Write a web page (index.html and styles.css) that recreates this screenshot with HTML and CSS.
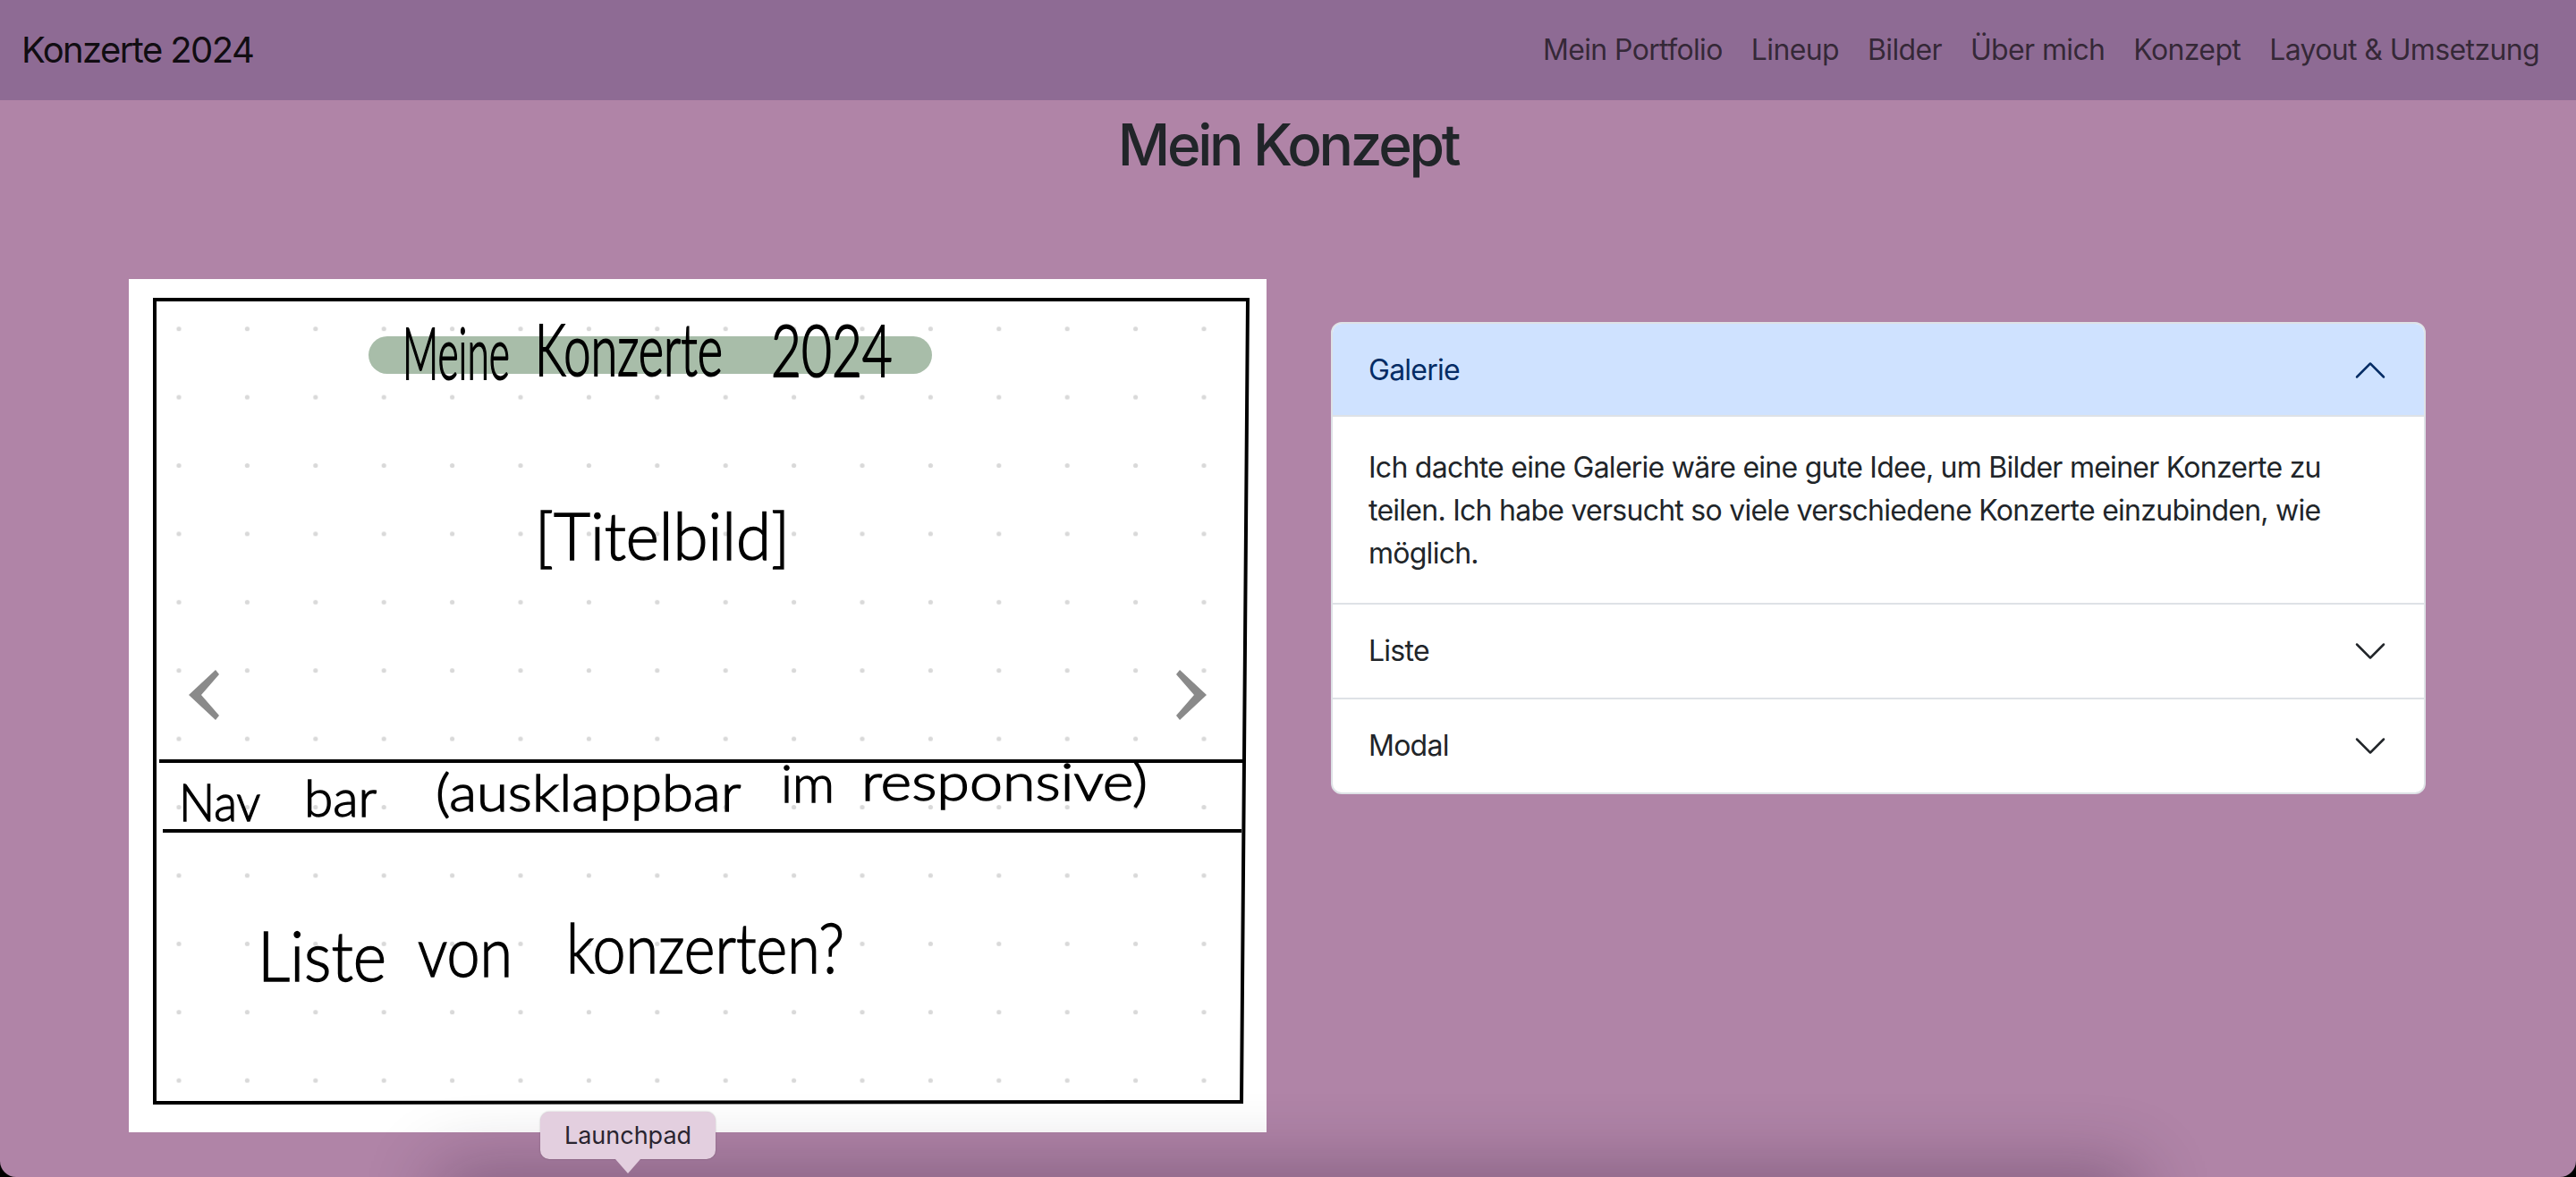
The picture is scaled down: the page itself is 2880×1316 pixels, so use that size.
FILE: index.html
```html
<!DOCTYPE html>
<html lang="de">
<head>
    <meta charset="UTF-8">
    <title>Mein Konzept</title>
    <link rel="stylesheet" href="styles.css">
</head>
<body>
<div class="screen">
    <nav class="navbar">
        <a class="brand" href="#">Konzerte 2024</a>
        <ul class="nav-list">
            <li>Mein Portfolio</li>
            <li>Lineup</li>
            <li>Bilder</li>
            <li>Über mich</li>
            <li>Konzept</li>
            <li>Layout &amp; Umsetzung</li>
        </ul>
    </nav>

    <h2 class="page-title">Mein Konzept</h2>

    <div class="concept-row">
        <div class="sketch">
            <!-- the viewBox uses page coordinates, the scan is a free canvas -->
            <svg class="sketch-img" viewBox="144 312 1272 954" width="1272" height="954">
                <defs>
                    <pattern id="dots" x="161.8" y="329.5" width="76.4" height="76.4" patternUnits="userSpaceOnUse">
                        <circle cx="38.2" cy="38.2" r="2.6" fill="#d9d9d9"/>
                    </pattern>
                </defs>
                <rect x="162" y="330" width="1222" height="917" fill="url(#dots)"/>
                <rect x="412" y="376" width="630" height="42" rx="21" fill="#a8bda9"/>
                <path class="pen" d="M173 335 L1395 335 L1388 1232 L173 1233 Z"/>
                <path class="pen" d="M178 851 L1390 851"/>
                <path class="pen" d="M182 929 L1388 929"/>

                <text class="hand tall" transform="translate(450 424) scale(.54 1)" textLength="222" lengthAdjust="spacingAndGlyphs">Meine</text>
                <text class="hand tall" transform="translate(598 420) scale(.65 1)" textLength="323" lengthAdjust="spacingAndGlyphs">Konzerte</text>
                <text class="hand tall" transform="translate(862 421) scale(.73 1)" textLength="186" lengthAdjust="spacingAndGlyphs">2024</text>
                <text class="hand title-word" x="598" y="626" textLength="285" lengthAdjust="spacingAndGlyphs">[Titelbild]</text>

                <text class="hand mid">
                    <tspan x="200" y="918" textLength="90" lengthAdjust="spacingAndGlyphs">Nav</tspan>
                    <tspan x="340" y="913" textLength="80" lengthAdjust="spacingAndGlyphs">bar</tspan>
                    <tspan x="487" y="907" textLength="340" lengthAdjust="spacingAndGlyphs">(ausklappbar</tspan>
                    <tspan x="873" y="897" textLength="60" lengthAdjust="spacingAndGlyphs">im</tspan>
                    <tspan x="963" y="895" textLength="320" lengthAdjust="spacingAndGlyphs">responsive)</tspan>
                </text>

                <text class="hand big">
                    <tspan x="288" y="1097" textLength="144" lengthAdjust="spacingAndGlyphs">Liste</tspan>
                    <tspan x="467" y="1092" textLength="106" lengthAdjust="spacingAndGlyphs">von</tspan>
                    <tspan x="633" y="1088" textLength="311" lengthAdjust="spacingAndGlyphs">konzerten?</tspan>
                </text>
            </svg>
            <span class="ctrl ctrl-prev">
                <svg viewBox="0 0 34 56" width="34" height="56"><path d="M30 0 L34 5 L14 28 L34 51 L30 56 L0 28 Z"/></svg>
            </span>
            <span class="ctrl ctrl-next">
                <svg viewBox="0 0 34 56" width="34" height="56"><path d="M4 0 L0 5 L20 28 L0 51 L4 56 L34 28 Z"/></svg>
            </span>
        </div>

        <div class="accordion">
            <div class="acc-item">
                <div class="acc-head open">
                    <span>Galerie</span>
                    <svg class="chev up" viewBox="0 0 16 16" width="40" height="40"><path d="M1.646 4.646a.5.5 0 0 1 .708 0L8 10.293l5.646-5.647a.5.5 0 0 1 .708.708l-6 6a.5.5 0 0 1-.708 0l-6-6a.5.5 0 0 1 0-.708z"/></svg>
                </div>
                <div class="acc-body">Ich dachte eine Galerie wäre eine gute Idee, um Bilder meiner Konzerte zu teilen. Ich habe versucht so viele verschiedene Konzerte einzubinden, wie möglich.</div>
            </div>
            <div class="acc-item">
                <div class="acc-head">
                    <span>Liste</span>
                    <svg class="chev" viewBox="0 0 16 16" width="40" height="40"><path d="M1.646 4.646a.5.5 0 0 1 .708 0L8 10.293l5.646-5.647a.5.5 0 0 1 .708.708l-6 6a.5.5 0 0 1-.708 0l-6-6a.5.5 0 0 1 0-.708z"/></svg>
                </div>
            </div>
            <div class="acc-item">
                <div class="acc-head">
                    <span>Modal</span>
                    <svg class="chev" viewBox="0 0 16 16" width="40" height="40"><path d="M1.646 4.646a.5.5 0 0 1 .708 0L8 10.293l5.646-5.647a.5.5 0 0 1 .708.708l-6 6a.5.5 0 0 1-.708 0l-6-6a.5.5 0 0 1 0-.708z"/></svg>
                </div>
            </div>
        </div>
    </div>

    <div class="dock-shadow"></div>
    <div class="tooltip">Launchpad</div>
</div>
</body>
</html>
```

FILE: styles.css
```css
*{
    margin: 0;
    padding: 0;
    box-sizing: border-box;
}
html,body{
    background: #000;
}
ul{
    list-style: none;
}
.screen{
    position: relative;
    width: 2880px;
    height: 1316px;
    overflow: hidden;
    border-radius: 0 0 18px 18px;
    background: #b084a7;
    color: #212529;
    font-family: Inter, "Liberation Sans", sans-serif;
    font-size: 32px;
    line-height: 1.5;
    letter-spacing: -.74px;
}

/* navbar */
.navbar{
    display: flex;
    justify-content: space-between;
    align-items: center;
    height: 112px;
    padding: 0 41px 0 24px;
    background: #8e6b94;
}
.brand{
    color: rgba(0,0,0,.9);
    font-size: 40px;
    letter-spacing: -1.6px;
    text-decoration: none;
}
.nav-list{
    display: flex;
    gap: 32px;
    color: rgba(0,0,0,.65);
    letter-spacing: -.63px;
}

.page-title{
    margin-top: 12px;
    font-size: 64px;
    font-weight: 550;
    letter-spacing: -3.3px;
    line-height: 1.2;
    text-align: center;
}

.concept-row{
    display: flex;
    gap: 72px;
    margin-top: 111px;
    padding-left: 144px;
}

/* scanned sketch */
.sketch{
    position: relative;
    width: 1272px;
    height: 954px;
    background: #fff;
}
.sketch-img{
    display: block;
}
.pen{
    fill: none;
    stroke: #000;
    stroke-width: 4;
}
.hand{
    fill: #000;
    stroke: #000;
    stroke-width: 1.4;
    font-family: Lato, "Open Sans", sans-serif;
    font-weight: 300;
    letter-spacing: 0;
}
.tall{
    font-size: 80px;
    stroke-width: 2;
}
.title-word{
    font-size: 72px;
}
.mid{
    font-size: 58px;
}
.big{
    font-size: 76px;
}
.ctrl{
    position: absolute;
    top: 437px;
    display: flex;
    fill: #8a8a8a;
}
.ctrl-prev{
    left: 67px;
}
.ctrl-next{
    right: 67px;
}

/* accordion */
.accordion{
    width: 1224px;
    height: 528px;
    margin-top: 48px;
    border: 2px solid #dee2e6;
    border-radius: 12px;
    overflow: hidden;
    background: #fff;
}
.acc-item + .acc-item{
    border-top: 2px solid #dee2e6;
}
.acc-head{
    display: flex;
    justify-content: space-between;
    align-items: center;
    height: 104px;
    padding: 0 40px;
}
.acc-head.open{
    background: #cfe2ff;
    color: #052c65;
    box-shadow: inset 0 -2px 0 #dee2e6;
}
.chev{
    fill: #212529;
}
.chev.up{
    fill: #052c65;
    transform: rotate(180deg);
}
.acc-body{
    height: 208px;
    padding: 33px 40px 31px;
}

/* macOS dock peeking in at the bottom */
.dock-shadow{
    position: absolute;
    left: 500px;
    bottom: -70px;
    width: 1880px;
    height: 70px;
    box-shadow: 0 0 80px 10px rgba(30,10,40,.3);
}
.tooltip{
    position: absolute;
    left: 604px;
    top: 1243px;
    width: 196px;
    height: 53px;
    border-radius: 10px;
    background: #e3cfdf;
    box-shadow: 0 0 2px rgba(0,0,0,.25);
    color: #2a2530;
    font-size: 27px;
    letter-spacing: 0;
    line-height: 53px;
    text-align: center;
}
.tooltip::after{
    content: "";
    position: absolute;
    left: 84px;
    top: 53px;
    width: 28px;
    height: 16px;
    background: #e3cfdf;
    clip-path: polygon(0 0, 100% 0, 50% 100%);
}
```
